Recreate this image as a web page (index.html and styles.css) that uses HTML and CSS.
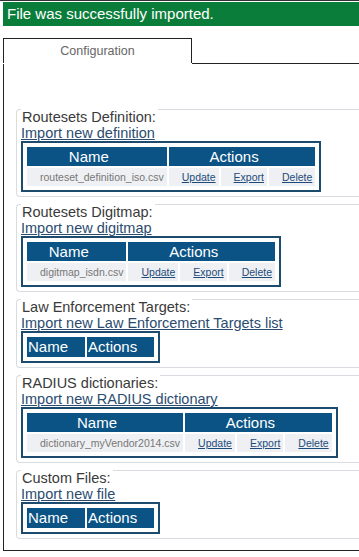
FILE: index.html
```html
<!DOCTYPE html>
<html lang="en">
<head>
  <meta charset="UTF-8" />
  <meta name="viewport" content="width=device-width, initial-scale=1" />
  <title>Configuration</title>
  <link rel="stylesheet" href="styles.css">
</head>
<body>
  <div class="page">
    <div class="notice">File was successfully imported.</div>

    <div class="tabs">
      <div class="tab">Configuration</div>
      <div class="tab-rest"></div>
    </div>

    <div class="panel">
      <div class="section">
        <div class="section-title">Routesets Definition:</div>
        <a class="section-link" href="#">Import new definition</a>
        <table class="files">
          <tr><th>Name</th><th colspan="3">Actions</th></tr>
          <tr>
            <td>routeset_definition_iso.csv</td>
            <td><a href="#">Update</a></td>
            <td><a href="#">Export</a></td>
            <td><a href="#">Delete</a></td>
          </tr>
        </table>
      </div>

      <div class="section">
        <div class="section-title">Routesets Digitmap:</div>
        <a class="section-link" href="#">Import new digitmap</a>
        <table class="files">
          <tr><th>Name</th><th colspan="3">Actions</th></tr>
          <tr>
            <td>digitmap_isdn.csv</td>
            <td><a href="#">Update</a></td>
            <td><a href="#">Export</a></td>
            <td><a href="#">Delete</a></td>
          </tr>
        </table>
      </div>

      <div class="section">
        <div class="section-title">Law Enforcement Targets:</div>
        <a class="section-link" href="#">Import new Law Enforcement Targets list</a>
        <table class="files empty">
          <tr><th>Name</th><th>Actions</th></tr>
        </table>
      </div>

      <div class="section">
        <div class="section-title">RADIUS dictionaries:</div>
        <a class="section-link" href="#">Import new RADIUS dictionary</a>
        <table class="files">
          <tr><th>Name</th><th colspan="3">Actions</th></tr>
          <tr>
            <td>dictionary_myVendor2014.csv</td>
            <td><a href="#">Update</a></td>
            <td><a href="#">Export</a></td>
            <td><a href="#">Delete</a></td>
          </tr>
        </table>
      </div>

      <div class="section">
        <div class="section-title">Custom Files:</div>
        <a class="section-link" href="#">Import new file</a>
        <table class="files empty">
          <tr><th>Name</th><th>Actions</th></tr>
        </table>
      </div>
    </div>
  </div>
</body>
</html>
```

FILE: styles.css
```css
* {
  box-sizing: border-box;
}

body {
  margin: 0;
  background: #fff;
  color: #3a3a3a;
  font-family: "Liberation Sans", Arial, sans-serif;
}

.page {
  border-top: 1px solid #333;
}

.notice {
  margin: 1px 0 0 3px;
  height: 24px;
  padding-left: 4px;
  background: #0b7d3b;
  color: #fff;
  font-size: 15px;
  line-height: 24px;
}

.tabs {
  display: flex;
  align-items: flex-start;
  margin: 12px 0 0 3px;
}

.tab {
  width: 189px;
  height: 25px;
  border: 1px solid #222;
  border-bottom: none;
  color: #666;
  font-size: 12.5px;
  line-height: 24px;
  text-align: center;
}

.tab-rest {
  flex: 1;
  height: 26px;
  border-bottom: 1px solid #222;
}

.panel {
  margin-left: 3px;
  padding: 45px 0 4px 12px;
  border-left: 1px solid #222;
  border-bottom: 1px solid #222;
}

.section {
  margin-bottom: 7px;
  padding: 0 0 4px 4px;
  border: 1px solid #d8dce0;
  border-right: none;
  border-radius: 4px 0 0 4px;
}

.section-title {
  width: fit-content;
  margin-top: -1px;
  padding: 0 2px 0 1px;
  background: #fff;
  font-size: 14.5px;
  line-height: 16px;
}

.section-link {
  display: block;
  width: fit-content;
  color: #2b4c6f;
  font-size: 14.5px;
  line-height: 16px;
}

.files {
  border: 2px solid #1c4b6e;
  padding: 2px;
  border-spacing: 2px;
}

.files th {
  padding: 0 17px 0 1px;
  background: #0b5384;
  color: #fff;
  font-size: 15px;
  font-weight: normal;
  line-height: 19px;
  text-align: center;
}

.files.empty th {
  line-height: 20px;
}

.files td {
  padding: 0 3px 0 13px;
  background: #eef0f3;
  color: #777;
  font-size: 10.5px;
  line-height: 18px;
  text-align: right;
  white-space: nowrap;
}

.files td a {
  color: #1d4b7a;
}
```
